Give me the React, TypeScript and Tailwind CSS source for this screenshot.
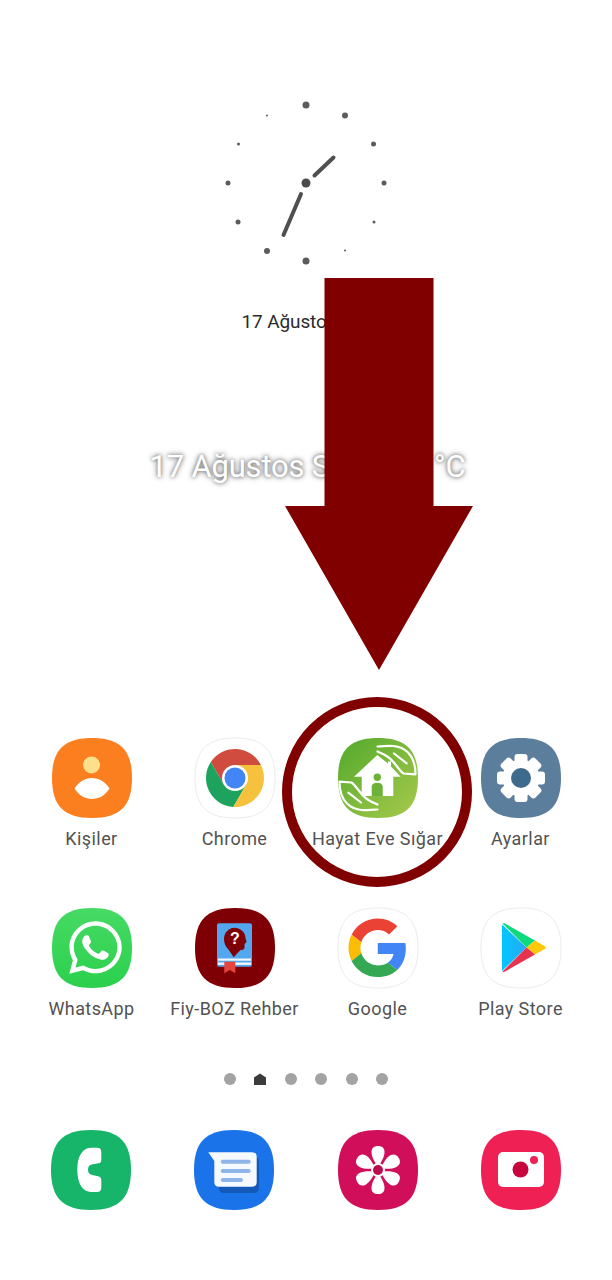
import type { ReactNode } from 'react'
import { FaWhatsapp } from 'react-icons/fa'

const SQUIRCLE = 'M40 0C68 0 80 12 80 40C80 68 68 80 40 80C12 80 0 68 0 40C0 12 12 0 40 0Z'

const clockDots = [
  [106, 12, 3.5],
  [145, 22.5, 3],
  [173.5, 51, 2.5],
  [184, 90, 2.5],
  [174, 129, 1.5],
  [145, 157.5, 1],
  [106, 168, 3.5],
  [67, 158, 3],
  [38, 129, 2.5],
  [28, 90, 2.5],
  [38.5, 51, 1.5],
  [67, 22.5, 1],
]

const AppIcon = ({
  fill,
  stroke,
  children,
}: {
  fill: string
  stroke?: string
  children: ReactNode
}) => (
  <svg width="80" height="80" viewBox="0 0 80 80" className="block overflow-visible">
    <path d={SQUIRCLE} fill={fill} stroke={stroke} strokeWidth={stroke ? 1 : 0} />
    {children}
  </svg>
)

const Label = ({ children }: { children: ReactNode }) => (
  <span className="mt-[7px] h-[28px] whitespace-nowrap font-['Roboto',sans-serif] text-[18px] leading-[28px] tracking-[0.42px] text-[#525252]">
    {children}
  </span>
)

const Contacts = () => (
  <AppIcon fill="#fb7e1f">
    <circle cx="39.5" cy="27" r="8.5" fill="#fde08b" />
    <path d="M22.5 50.5C27 43.5 33 40 40 40C47 40 53 43.5 57.5 50.5C53 57.5 47 61 40 61C33 61 27 57.5 22.5 50.5Z" fill="#fff" />
  </AppIcon>
)

const Chrome = () => (
  <AppIcon fill="#fff" stroke="#ececec">
    <path d="M40 27H65.9A29 29 0 0 0 15.8 24L28.74 46.5Z" fill="#d04c3f" />
    <path d="M28.74 46.5L15.8 24A29 29 0 0 0 38.3 68.95L51.26 46.5Z" fill="#1ea35e" />
    <path d="M51.26 46.5L38.3 68.95A29 29 0 0 0 65.9 27H40Z" fill="#f6c23e" />
    <circle cx="40" cy="40" r="13" fill="#fff" />
    <circle cx="40" cy="40" r="10.5" fill="#4285f4" />
  </AppIcon>
)

const HandOutline = () => (
  <g fill="none" stroke="#fff" strokeWidth="2.2" strokeLinejoin="round" strokeLinecap="round">
    <path d="M39.5 8.5C45 8.5 50 7.5 55.3 8C61 8.5 66 10.5 70 14.5C75 19.5 77.5 28 77.5 36.3L65.5 35.5C62 33 59.5 29 57 26C54 22 50 18.5 46 16.5C43.5 15 41 14.5 39.5 13.5" />
    <path d="M56 15.5L68.7 25.3" />
  </g>
)

const Hayat = () => (
  <svg width="80" height="80" viewBox="0 0 80 80" className="block">
    <defs>
      <linearGradient id="hayat" x1="0" y1="0" x2="1" y2="1">
        <stop offset="0" stopColor="#52a92c" />
        <stop offset="1" stopColor="#a8ca4c" />
      </linearGradient>
    </defs>
    <path d={SQUIRCLE} fill="url(#hayat)" />
    <HandOutline />
    <g transform="rotate(180 39.5 40)">
      <HandOutline />
    </g>
    <path d="M39.3 17L50 25.5V23.5H53V28.5L62.7 38.7H55.3V58H23.7V38.7H16Z" fill="#fff" />
    <circle cx="39.3" cy="39.3" r="3.7" fill="#6bb236" />
    <path d="M33.7 58V48.5C33.7 46 36 44.7 39.3 44.7C42.5 44.7 44.7 46 44.7 48.5V58Z" fill="#6bb236" />
  </svg>
)

const Settings = () => (
  <AppIcon fill="#5a7e9c">
    {[0, 45, 90, 135, 180, 225, 270, 315].map((deg) => (
      <rect key={deg} x="33.5" y="16" width="13" height="12" rx="3" fill="#fff" transform={`rotate(${deg} 40 40)`} />
    ))}
    <circle cx="40" cy="40" r="18.5" fill="#fff" />
    <circle cx="40" cy="40" r="10" fill="#3e6b8b" />
  </AppIcon>
)

const WhatsApp = () => (
  <svg width="80" height="80" viewBox="0 0 80 80" className="block">
    <defs>
      <linearGradient id="wa" x1="0" y1="0" x2="0" y2="1">
        <stop offset="0" stopColor="#46da64" />
        <stop offset="1" stopColor="#2bd04d" />
      </linearGradient>
    </defs>
    <path d={SQUIRCLE} fill="url(#wa)" />
    <FaWhatsapp x={13.5} y={9.5} size={60} color="#fff" />
  </svg>
)

const Rehber = () => (
  <AppIcon fill="#7f0004">
    <rect x="22" y="15.3" width="35" height="43.4" rx="2" fill="#53a7ee" />
    <rect x="23" y="50.5" width="33" height="2.2" fill="#f1f7fd" />
    <rect x="23" y="54.5" width="33" height="2.4" fill="#f1f7fd" />
    <path d="M29.3 53.7H40.3V65.3L34.8 62L29.3 65.3Z" fill="#e4453d" />
    <path d="M39.3 19.7C46 19.7 50.5 25 50.5 30C50.5 31.5 51.5 32.5 51.5 33.5C51.5 35 49.5 35 49.5 36.5V39.5C49.5 41.5 47.5 42 45.5 42L38.7 49.3L33.5 41.5C30.5 39 29 35 29 31C29 25 33.5 19.7 39.3 19.7Z" fill="#7f0004" />
    <text x="39.8" y="36" textAnchor="middle" fontFamily="'Liberation Sans', sans-serif" fontWeight="700" fontSize="16" fill="#fff">?</text>
  </AppIcon>
)

const Google = () => (
  <AppIcon fill="#fff" stroke="#ececec">
    <g transform="translate(10.5 10.5) scale(1.22)">
      <path fill="#EA4335" d="M24 9.5c3.54 0 6.71 1.22 9.21 3.6l6.85-6.85C35.9 2.38 30.47 0 24 0 14.62 0 6.51 5.38 2.56 13.22l7.98 6.19C12.43 13.72 17.74 9.5 24 9.5z" />
      <path fill="#4285F4" d="M46.98 24.55c0-1.57-.15-3.09-.38-4.55H24v9.02h12.94c-.58 2.96-2.26 5.48-4.79 7.18l7.73 6c4.51-4.18 7.1-10.36 7.1-17.65z" />
      <path fill="#FBBC05" d="M10.53 28.59c-.48-1.45-.76-2.99-.76-4.59s.27-3.14.76-4.59l-7.98-6.19C.92 16.46 0 20.12 0 24c0 3.88.92 7.54 2.56 10.78l7.97-6.19z" />
      <path fill="#34A853" d="M24 48c6.48 0 11.93-2.13 15.89-5.81l-7.73-6c-2.15 1.45-4.92 2.3-8.16 2.3-6.26 0-11.57-4.22-13.47-9.91l-7.98 6.19C6.51 42.62 14.62 48 24 48z" />
    </g>
  </AppIcon>
)

const PlayStore = () => (
  <svg width="80" height="80" viewBox="0 0 80 80" className="block overflow-visible">
    <defs>
      <linearGradient id="playBlue" x1="0" y1="0" x2="1" y2="0">
        <stop offset="0" stopColor="#00c6ff" />
        <stop offset="1" stopColor="#2aa8f5" />
      </linearGradient>
    </defs>
    <path d={SQUIRCLE} fill="#fff" stroke="#ececec" strokeWidth="1" />
    <path d="M21 16.5L45.5 39.5L21 63Z" fill="url(#playBlue)" />
    <path d="M21.5 15.5C22 15 23 15 24 15.5L54 32.5L45.5 39.5Z" fill="#0fd97f" />
    <path d="M54 32.5L64 38.2C65 39 65 40 64 40.8L54 46.5L45.5 39.5Z" fill="#ffc80b" />
    <path d="M21.5 63.5C22 64 23 64 24 63.5L54 46.5L45.5 39.5Z" fill="#e8334f" />
  </svg>
)

const Phone = () => (
  <AppIcon fill="#16b56a">
    <path
      d="M40 17.7H46Q50.3 17.7 50.3 22V30Q50.3 33.5 46 33.5L41 34.5Q37 35 37 39.5Q37 44 41 45L46 46Q50.3 46.5 50.3 50V57.5Q50.3 62 46 62H40C32 62 26.3 54 26.3 39.8C26.3 25.5 32 17.7 40 17.7Z"
      fill="#fff"
    />
  </AppIcon>
)

const Messages = () => (
  <AppIcon fill="#1a73e8">
    <path d="M24 27H60Q65 27 65 32V58Q65 63 60 63H30Q25 63 25 58V36Z" fill="#1559b8" />
    <path d="M14.3 22.3H58Q62.7 22.3 62.7 27V52Q62.7 56.7 58 56.7H25Q20.3 56.7 20.3 52V31Z" fill="#f6f9fe" />
    <path d="M28.7 31.7H54.7M28.7 41H54.7M28.7 50H47" stroke="#8fb4ea" strokeWidth="4" strokeLinecap="round" />
  </AppIcon>
)

const Gallery = () => (
  <AppIcon fill="#d00e5a">
    {[0, 60, 120, 180, 240, 300].map((deg) => (
      <path
        key={deg}
        d="M40 37C36 31 33.5 26.5 33.5 22C33.5 18 36 16 40 16C44 16 46.5 18 46.5 22C46.5 26.5 44 31 40 37Z"
        fill="#fff"
        transform={`rotate(${deg} 40 40)`}
      />
    ))}
    <circle cx="40" cy="40" r="7" fill="#fff" />
    <circle cx="40" cy="40" r="5" fill="#b90d50" />
  </AppIcon>
)

const Camera = () => (
  <AppIcon fill="#ef2053">
    <rect x="17" y="22" width="46" height="35" rx="5" fill="#fff" />
    <circle cx="39.5" cy="39.5" r="8" fill="#c8063e" />
    <circle cx="53" cy="30" r="4" fill="#ef2053" />
  </AppIcon>
)

const row1 = [
  { label: 'Kişiler', icon: <Contacts /> },
  { label: 'Chrome', icon: <Chrome /> },
  { label: 'Hayat Eve Sığar', icon: <Hayat /> },
  { label: 'Ayarlar', icon: <Settings /> },
]

const row2 = [
  { label: 'WhatsApp', icon: <WhatsApp /> },
  { label: 'Fiy-BOZ Rehber', icon: <Rehber /> },
  { label: 'Google', icon: <Google /> },
  { label: 'Play Store', icon: <PlayStore /> },
]

const dock = [<Phone key="phone" />, <Messages key="messages" />, <Gallery key="gallery" />, <Camera key="camera" />]

export default function App() {
  return (
    <div className="relative flex h-[1280px] w-[612px] flex-col items-center overflow-hidden bg-white pt-[93px]">
      <svg width="212" height="180" viewBox="0 0 212 180" className="block">
        {clockDots.map(([cx, cy, r]) => (
          <circle key={`${cx}-${cy}`} cx={cx} cy={cy} r={r} fill="#5c5c5c" />
        ))}
        <circle cx="106" cy="90" r="4.5" fill="#4a4a4a" />
        <path d="M101 101L83.5 142M114.5 82.5L133.5 64.5" stroke="#4f4f4f" strokeWidth="4" strokeLinecap="round" />
      </svg>

      <p className="mt-[35px] h-[28px] whitespace-nowrap pl-[1px] font-['Roboto',sans-serif] text-[19px] leading-[28px] tracking-[-0.1px] text-[#2b2b2b]">
        17 Ağustos Salı
      </p>

      <p className="mt-[111px] h-[40px] whitespace-nowrap pl-[3px] font-['Roboto',sans-serif] text-[31px] leading-[40px] tracking-[-0.2px] text-white [text-shadow:0_0_4px_rgba(0,0,0,0.6),0_0_7px_rgba(0,0,0,0.3)]">
        17 Ağustos Salı 24,5 °C
      </p>

      <div className="mt-[251px] grid w-full grid-cols-4 gap-y-[55px] px-[20px]">
        {[...row1, ...row2].map((app) => (
          <div key={app.label} className="flex flex-col items-center">
            {app.icon}
            <Label>{app.label}</Label>
          </div>
        ))}
      </div>

      <div className="mt-[50px] flex items-center gap-[18.6px]">
        <span className="h-[12px] w-[12px] rounded-full bg-[#a3a3a3]" />
        <svg width="12" height="12" viewBox="0 0 12 12" className="block">
          <path d="M6 0.5L12 4.5V12H0V4.5Z" fill="#3c3c3c" />
        </svg>
        <span className="h-[12px] w-[12px] rounded-full bg-[#a3a3a3]" />
        <span className="h-[12px] w-[12px] rounded-full bg-[#a3a3a3]" />
        <span className="h-[12px] w-[12px] rounded-full bg-[#a3a3a3]" />
        <span className="h-[12px] w-[12px] rounded-full bg-[#a3a3a3]" />
      </div>

      <div className="mt-[45px] grid w-full grid-cols-4 px-[19px]">
        {dock.map((icon, i) => (
          <div key={i} className="flex justify-center">
            {icon}
          </div>
        ))}
      </div>

      {/* annotation over the screenshot */}
      <svg width="188" height="392" viewBox="0 0 188 392" className="absolute left-[284.5px] top-[278px]">
        <path d="M39.5 0H148.5V228H188L94 392L0 228H39.5Z" fill="#800000" />
      </svg>
      <div className="absolute left-[282px] top-[697px] h-[190px] w-[190px] rounded-full border-[10px] border-[#800000]" />
    </div>
  )
}
